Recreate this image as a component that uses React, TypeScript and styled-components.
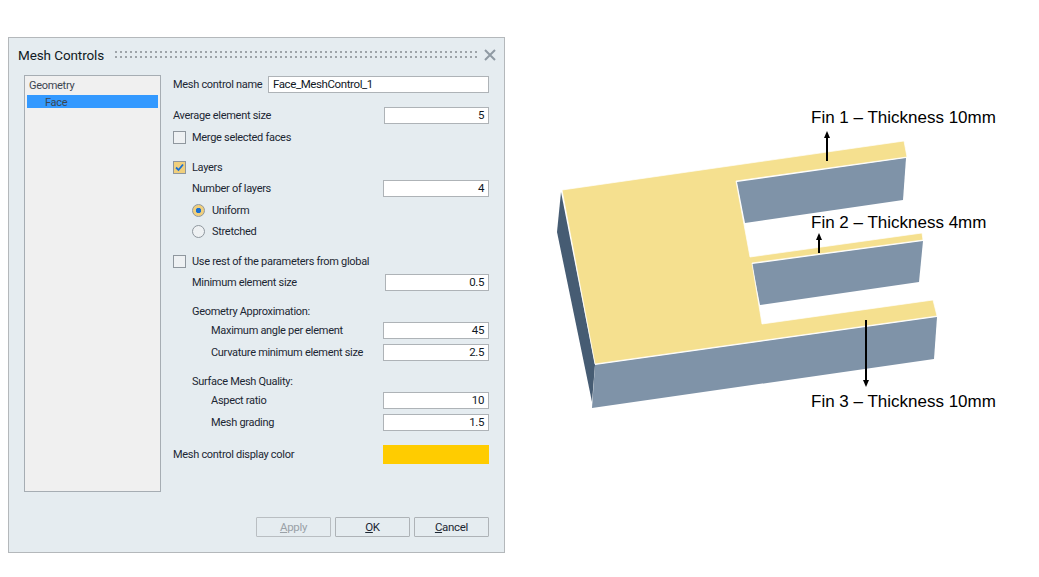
import styled, { createGlobalStyle } from "styled-components";

const GlobalStyle = createGlobalStyle`
  html, body {
    margin: 0;
    padding: 0;
    background: #ffffff;
  }
`;

const PANEL = "#e5ecf0";

const Page = styled.div`
  display: flex;
  align-items: flex-start;
  width: 1039px;
  height: 577px;
  padding: 37px 0 0 8px;
  box-sizing: border-box;
  overflow: hidden;
  background: #ffffff;
`;

const Dialog = styled.div`
  display: flex;
  flex-direction: column;
  width: 497px;
  height: 516px;
  box-sizing: border-box;
  padding: 0 15px 15px;
  background: ${PANEL};
  border: 1px solid #b4b8bb;
  font-family: Roboto, "Open Sans", sans-serif;
  font-size: 11px;
  letter-spacing: -0.3px;
  color: #1c2733;
`;

const TitleBar = styled.div`
  display: flex;
  align-items: center;
  height: 37px;
  box-sizing: border-box;
  padding-bottom: 4px;
  margin-left: -6px;
  margin-right: -7px;
`;

const Title = styled.div`
  font-size: 13.5px;
  letter-spacing: -0.1px;
  width: 97px;
  flex: none;
  color: #111a24;
`;

const Grip = styled.div`
  width: 362px;
  height: 7px;
  flex: none;
  background-image:
    linear-gradient(to bottom, transparent 2px, ${PANEL} 2px),
    linear-gradient(to right, #9ea4a9 2px, transparent 2px);
  background-size: 5px 5px;
`;

const CloseButton = styled.div`
  display: flex;
  margin-left: 7px;
  color: #8f9aa3;
`;

const Body = styled.div`
  display: flex;
  flex: 1;
  gap: 12px;
  min-height: 0;
`;

const Tree = styled.div`
  width: 137px;
  height: 417px;
  flex: none;
  box-sizing: border-box;
  padding: 2px;
  background: #f0f0f0;
  border: 1px solid #a6adb3;
  color: #3d4650;
`;

const TreeItem = styled.div<{ $selected?: boolean }>`
  height: ${({ $selected }) => ($selected ? "13px" : "15px")};
  margin-top: ${({ $selected }) => ($selected ? "2px" : "0")};
  line-height: 15px;
  padding-left: ${({ $selected }) => ($selected ? "18px" : "2px")};
  background: ${({ $selected }) => ($selected ? "#3399ff" : "transparent")};
`;

const Form = styled.div`
  display: flex;
  flex-direction: column;
  flex: 1;
  min-width: 0;
  padding-top: 1px;
`;

const Row = styled.div<{ $top?: number; $indent?: number }>`
  display: flex;
  align-items: center;
  height: 17px;
  flex: none;
  margin-top: ${({ $top }) => $top ?? 0}px;
  padding-left: ${({ $indent }) => $indent ?? 0}px;
`;

const Label = styled.label`
  flex: 1;
  line-height: 17px;
  white-space: nowrap;
`;

const Field = styled.div<{ $width: number; $left?: boolean }>`
  width: ${({ $width }) => $width}px;
  height: 17px;
  flex: none;
  box-sizing: border-box;
  padding: 0 4px;
  line-height: 14px;
  font-size: 11.5px;
  letter-spacing: -0.4px;
  text-align: ${({ $left }) => ($left ? "left" : "right")};
  background: #ffffff;
  border: 1px solid #aeb3b7;
  color: #10181f;
`;

const Box = styled.span<{ $checked?: boolean }>`
  display: flex;
  align-items: center;
  justify-content: center;
  width: 13px;
  height: 13px;
  margin-right: 6px;
  flex: none;
  box-sizing: border-box;
  background: ${({ $checked }) => ($checked ? "#f0cf7c" : "#eef1f3")};
  border: 1px solid #8f979e;
`;

const Radio = styled.span<{ $checked?: boolean }>`
  width: 13px;
  height: 13px;
  margin-right: 7px;
  flex: none;
  box-sizing: border-box;
  border-radius: 50%;
  border: 1px solid #8f979e;
  background: ${({ $checked }) =>
    $checked
      ? "radial-gradient(circle, #1a6fd0 0 2.4px, #f0cf7c 3px)"
      : "#eef1f3"};
`;

const Swatch = styled.div`
  width: 106px;
  height: 19px;
  flex: none;
  background: #ffcc00;
`;

const ColorRow = styled(Row)`
  height: 19px;
`;

const Buttons = styled.div`
  display: flex;
  justify-content: flex-end;
  gap: 4px;
  margin-top: auto;
`;

const Button = styled.button<{ $disabled?: boolean }>`
  width: 75px;
  height: 20px;
  padding: 0 0 1px;
  font-family: inherit;
  font-size: 11.5px;
  letter-spacing: -0.3px;
  border-radius: 1px;
  background: ${PANEL};
  border: 1px solid ${({ $disabled }) => ($disabled ? "#b9bec2" : "#aeb3b7")};
  color: ${({ $disabled }) => ($disabled ? "#9aa1a7" : "#1c2733")};
`;

const Key = styled.span`
  text-decoration: underline;
`;

const Figure = styled.div`
  position: relative;
  width: 534px;
  height: 540px;
  flex: none;
`;

const Model = styled.svg`
  display: block;
`;

const Callout = styled.div<{ $x: number; $y: number }>`
  position: absolute;
  left: ${({ $x }) => $x}px;
  top: ${({ $y }) => $y}px;
  font-family: "Liberation Sans", Arial, sans-serif;
  font-size: 17px;
  line-height: 20px;
  white-space: nowrap;
  color: #000000;
`;

const TOP = "#f5e08f";
const WALL = "#7f93a8";
const SIDE = "#465c73";

// svg coordinates are relative to the figure, whose origin is page (505,37)
const shift = (pts: [number, number][]) =>
  pts.map(([x, y]) => `${x - 505},${y - 37}`).join(" ");

const topFace = shift([
  [562, 190], [904, 141], [907, 157], [736, 181], [750, 257], [922, 233],
  [923, 240], [752, 263], [762, 324], [933, 300], [937, 316], [595, 364],
]);
const fin1Wall = shift([[737, 182], [906, 158], [903, 200], [745, 223]]);
const fin2Wall = shift([[752, 264], [923, 241], [919, 282], [760, 305]]);
const frontWall = shift([[595, 365], [937, 317], [934, 359], [592, 408]]);
const sideWall = shift([[561, 192], [557, 232], [592, 402], [595, 365]]);

const Arrow = ({ x, y1, y2 }: { x: number; y1: number; y2: number }) => {
  const up = y2 < y1;
  const tip = y2 - 37;
  const base = up ? tip + 7 : tip - 7;
  return (
    <g>
      <line x1={x - 505} y1={y1 - 37} x2={x - 505} y2={base} stroke="#000" strokeWidth="2" />
      <polygon points={`${x - 505},${tip} ${x - 508},${base} ${x - 502},${base}`} fill="#000" />
    </g>
  );
};

export default function App() {
  return (
    <>
      <GlobalStyle />
      <Page>
        <Dialog>
          <TitleBar>
            <Title>Mesh Controls</Title>
            <Grip />
            <CloseButton>
              <svg width="12" height="12" viewBox="0 0 12 12">
                <path d="M1 1L11 11M11 1L1 11" stroke="currentColor" strokeWidth="2" fill="none" />
              </svg>
            </CloseButton>
          </TitleBar>
          <Body>
            <Tree>
              <TreeItem>Geometry</TreeItem>
              <TreeItem $selected>Face</TreeItem>
            </Tree>
            <Form>
              <Row>
                <Label>Mesh control name</Label>
                <Field $width={221} $left>Face_MeshControl_1</Field>
              </Row>
              <Row $top={14}>
                <Label>Average element size</Label>
                <Field $width={105}>5</Field>
              </Row>
              <Row $top={5}>
                <Box />
                <Label>Merge selected faces</Label>
              </Row>
              <Row $top={13}>
                <Box $checked>
                  <svg width="11" height="11" viewBox="0 0 11 11">
                    <path d="M2 5.5L4.5 8L9 2.5" stroke="#1a6fd0" strokeWidth="1.8" fill="none" />
                  </svg>
                </Box>
                <Label>Layers</Label>
              </Row>
              <Row $top={4} $indent={19}>
                <Label>Number of layers</Label>
                <Field $width={106}>4</Field>
              </Row>
              <Row $top={5} $indent={19}>
                <Radio $checked />
                <Label>Uniform</Label>
              </Row>
              <Row $top={4} $indent={19}>
                <Radio />
                <Label>Stretched</Label>
              </Row>
              <Row $top={13}>
                <Box />
                <Label>Use rest of the parameters from global</Label>
              </Row>
              <Row $top={4} $indent={19}>
                <Label>Minimum element size</Label>
                <Field $width={104}>0.5</Field>
              </Row>
              <Row $top={12} $indent={19}>
                <Label>Geometry Approximation:</Label>
              </Row>
              <Row $top={2} $indent={38}>
                <Label>Maximum angle per element</Label>
                <Field $width={106}>45</Field>
              </Row>
              <Row $top={5} $indent={38}>
                <Label>Curvature minimum element size</Label>
                <Field $width={106}>2.5</Field>
              </Row>
              <Row $top={12} $indent={19}>
                <Label>Surface Mesh Quality:</Label>
              </Row>
              <Row $top={2} $indent={38}>
                <Label>Aspect ratio</Label>
                <Field $width={106}>10</Field>
              </Row>
              <Row $top={5} $indent={38}>
                <Label>Mesh grading</Label>
                <Field $width={106}>1.5</Field>
              </Row>
              <ColorRow $top={14}>
                <Label>Mesh control display color</Label>
                <Swatch />
              </ColorRow>
              <Buttons>
                <Button $disabled><Key>A</Key>pply</Button>
                <Button><Key>O</Key>K</Button>
                <Button><Key>C</Key>ancel</Button>
              </Buttons>
            </Form>
          </Body>
        </Dialog>
        <Figure>
          <Model width="534" height="540" viewBox="0 0 534 540">
            <polygon points={sideWall} fill={SIDE} />
            <polygon points={fin1Wall} fill={WALL} />
            <polygon points={fin2Wall} fill={WALL} />
            <polygon points={frontWall} fill={WALL} />
            <polygon points={topFace} fill={TOP} stroke="#ffffff" strokeWidth="0.7" />
            <Arrow x={827} y1={161} y2={131} />
            <Arrow x={819} y1={253} y2={233} />
            <Arrow x={866} y1={320} y2={387} />
          </Model>
          <Callout $x={306} $y={71}>Fin 1 – Thickness 10mm</Callout>
          <Callout $x={306} $y={176}>Fin 2 – Thickness 4mm</Callout>
          <Callout $x={306} $y={355}>Fin 3 – Thickness 10mm</Callout>
        </Figure>
      </Page>
    </>
  );
}
